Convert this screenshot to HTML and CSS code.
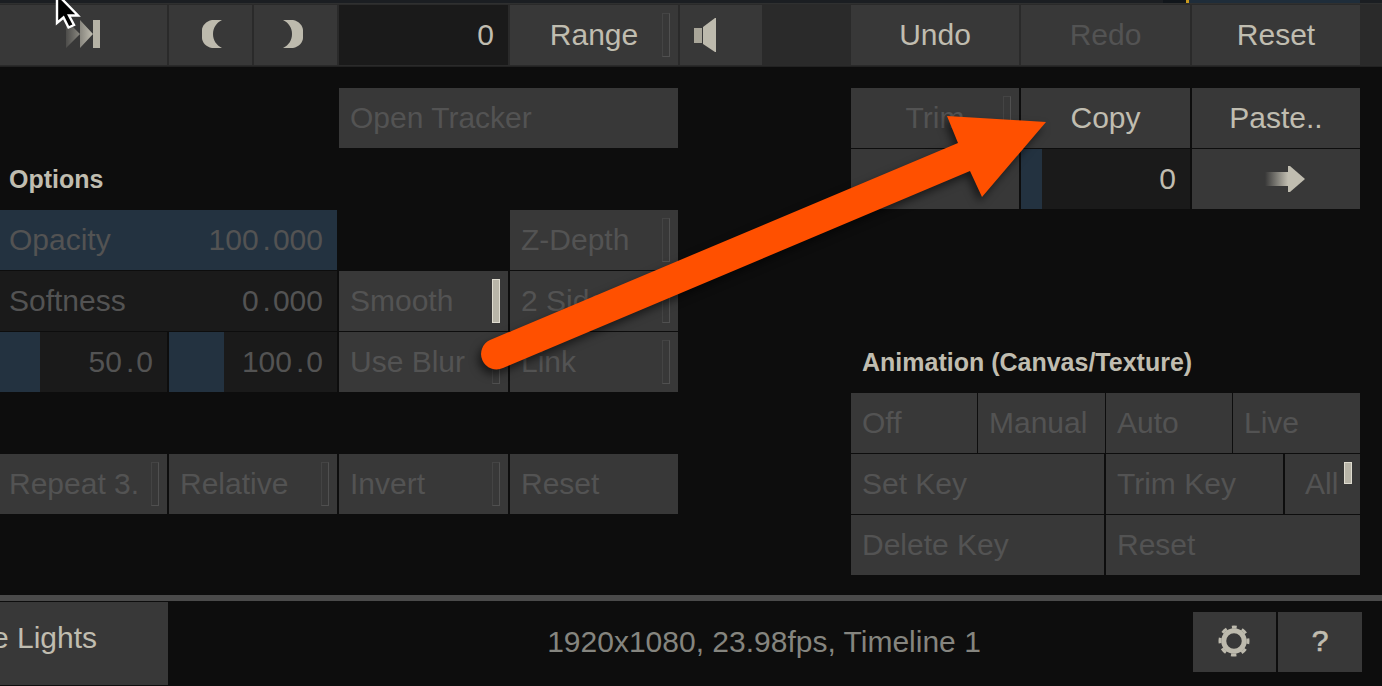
FILE: index.html
```html
<!DOCTYPE html>
<html lang="en">
<head>
<meta charset="utf-8">
<title>Panel</title>
<link rel="stylesheet" href="styles.css">
</head>
<body>
<div class="page">
  <div class="strip"><span class="strip-blue"></span><span class="strip-mark"></span></div>
  <header class="toolbar">
    <button class="btn center"><svg class="ico" width="36" height="30" viewBox="0 0 36 30"><defs><linearGradient id="fade" x1="0" x2="1" y1="0" y2="0"><stop offset="0" stop-color="#c0bdb0" stop-opacity=".15"/><stop offset="1" stop-color="#c0bdb0"/></linearGradient></defs><path fill="url(#fade)" d="M0 1 14 15 0 29zM14 1 27 15 14 29z"/><rect x="27" y="1" width="7" height="28" fill="#b5b2a5"/></svg></button>
    <button class="btn center half"><svg class="moon-l" width="20" height="28" viewBox="0 0 20 28"><path fill="#bdbaad" d="M20 0H10C4 1 0 6 0 10v8c0 4 4 9 10 10h10C14 25 11 20 11 14S14 3 20 0z"/></svg></button>
    <button class="btn center half"><svg class="moon-r" width="20" height="28" viewBox="0 0 20 28"><path fill="#bdbaad" d="M0 0h10c6 1 10 6 10 10v8c0 4-4 9-10 10H0c6-3 9-8 9-14S6 3 0 0z"/></svg></button>
    <div class="field on span-1"><span class="val">0</span></div>
    <button class="btn on center check-btn">Range<i class="chk"></i></button>
    <button class="btn sound"><svg width="22" height="34" viewBox="0 0 22 34"><path fill="#a9a699" d="M0 10h8v15H0z"/><path fill="#bdbaad" d="M9 9 21 0h1v34h-1L9 26z"/></svg></button>
    <div></div>
    <button class="btn on center">Undo</button>
    <button class="btn off center">Redo</button>
    <button class="btn on center">Reset</button>
  </header>

  <main class="panel">
    <button class="btn off left c4 r1">Open Tracker</button>
    <button class="btn off center c6 r1 check-btn">Trim<i class="chk"></i></button>
    <button class="btn on center c7 r1">Copy</button>
    <button class="btn on center c8 r1">Paste..</button>

    <h2 class="label label-options c1 r2">Options</h2>
    <button class="btn c6 r2"></button>
    <div class="field c7 r2 on"><span class="fill fill-12"></span><span class="val">0</span></div>
    <button class="btn center c8 r2"><svg class="next" width="40" height="26" viewBox="0 0 40 26"><defs><linearGradient id="tail" x1="0" x2="1" y1="0" y2="0"><stop offset="0" stop-color="#c0bdb0" stop-opacity="0"/><stop offset="1" stop-color="#c0bdb0"/></linearGradient></defs><path fill="url(#tail)" d="M0 6h23v14H0z"/><path fill="#c0bdb0" d="M23 0h2l15 13-15 13h-2z"/></svg></button>

    <div class="field wide blue c1-2 r3"><span>Opacity</span><span class="val">100<b class="dot">.</b>000</span></div>
    <button class="btn off left c5-like r3 check-btn z">Z-Depth<i class="chk"></i></button>

    <div class="field wide c1-2 r4"><span>Softness</span><span class="val">0<b class="dot">.</b>000</span></div>
    <button class="btn off left c4 r4 half-cell check-btn">Smooth<i class="chk chk-on"></i></button>
    <button class="btn off left c5-like r4 check-btn">2 Sided<i class="chk"></i></button>

    <div class="field off-text c1 r5"><span class="fill fill-40"></span><span class="val">50<b class="dot">.</b>0</span></div>
    <div class="field off-text c2 r5"><span class="fill fill-55"></span><span class="val">100<b class="dot">.</b>0</span></div>
    <button class="btn off left c4 r5 half-cell check-btn">Use Blur<i class="chk"></i></button>
    <button class="btn off left c5-like r5 check-btn">Link<i class="chk"></i></button>
    <h2 class="label c6 r5 label-indent">Animation (Canvas/Texture)</h2>

    <div class="anim-a r6">
      <button class="btn off left">Off</button>
      <button class="btn off left">Manual</button>
      <button class="btn off left">Auto</button>
      <button class="btn off left">Live</button>
    </div>

    <button class="btn off left tight c1 r7 check-btn">Repeat 3.<i class="chk"></i></button>
    <button class="btn off left c2 r7 check-btn">Relative<i class="chk"></i></button>
    <button class="btn off left c4 r7 half-cell check-btn">Invert<i class="chk"></i></button>
    <button class="btn off left c5-like r7">Reset</button>

    <div class="anim-b r7">
      <button class="btn off left">Set Key</button>
      <button class="btn off left">Trim Key</button>
      <button class="btn off all check-btn">All<i class="chk chk-on chk-short"></i></button>
    </div>
    <div class="anim-c r8">
      <button class="btn off left">Delete Key</button>
      <button class="btn off left">Reset</button>
    </div>
  </main>

  <div class="rule"></div>
  <footer class="footer">
    <button class="btn on lights">e Lights</button>
    <div class="status">1920x1080, 23.98fps, Timeline 1</div>
    <div class="tools">
      <button class="btn center tool"><svg class="gear" width="32" height="32" viewBox="-16 -16 32 32"><circle r="10.250" fill="none" stroke="#bdbaad" stroke-width="5"/><circle r="14" fill="none" stroke="#bdbaad" stroke-width="3" stroke-dasharray="5.500 5.500" stroke-dashoffset="2.750" transform="rotate(-90)"/></svg></button>
      <button class="btn on center tool help">?</button>
    </div>
  </footer>

  <svg class="callout" width="1382" height="686" viewBox="0 0 1382 686" aria-hidden="true"><path fill="#ff5000" d="M958 143 947 116 1046 122 982 197 970 171 503 368A15 15 0 0 1 490 340Z"/></svg>
  <svg class="cursor" width="30" height="32" viewBox="0 0 30 32" aria-hidden="true"><path fill="#000" stroke="#fff" stroke-width="2.400" d="M2 -6V23L8.500 17.500 13.500 27.500 19 25 14 15.500H23Z"/></svg>
</div>
</body>
</html>
```
FILE: styles.css
```css
* { box-sizing: border-box; }
html, body { margin: 0; height: 100%; background: #0d0d0d; overflow: hidden; }
.page {
  position: relative;
  width: 1382px;
  height: 686px;
  overflow: hidden;
  font-family: "Liberation Sans", Arial, sans-serif;
  font-size: 30px;
  color: #c0bdb0;
  background: #0d0d0d;
}
.strip {
  height: 4px;
  background: #1b1e22;
  border-bottom: 1px solid #2f3030;
  position: relative;
}
.strip-blue { position: absolute; left: 1163px; top: 0; width: 197px; height: 3px; background: linear-gradient(to right, #11161b 23px, #1f2d3a 23px); }
.strip-mark { position: absolute; left: 1186px; top: 0; width: 3px; height: 3px; background: #c99a1e; }
.toolbar {
  height: 63px;
  padding: 1px 0 2px;
  background: #2a2a2a;
  border-bottom: 1px solid #222;
  display: grid;
  grid-template-columns: 167px 83px 83px 169px 168px 82px 85px 168px 169px 168px;
  column-gap: 2px;
  grid-template-rows: 60px;
}
.btn {
  position: relative;
  display: flex;
  align-items: center;
  min-width: 0;
  margin: 0;
  padding: 0;
  border: 0;
  background: #383838;
  color: #c0bdb0;
  font: inherit;
  white-space: nowrap;
  overflow: hidden;
}
.center { justify-content: center; }
.left { justify-content: flex-start; padding-left: 11px; }
.tight { padding-left: 9px; }
.on { color: #c0bdb0; }
.off { color: #535353; }
.ico { margin-top: -2px; }
.sound { padding-left: 14px; }
.moon-l { margin: -2px 0 0 3px; }
.moon-r { margin: -2px 5px 0 0; }
.next { margin-left: 18px; }
.field {
  position: relative;
  display: flex;
  align-items: center;
  justify-content: flex-end;
  background: #1a1a1a;
  padding-right: 14px;
  white-space: nowrap;
  color: #535353;
  overflow: hidden;
}
.field.on { color: #c0bdb0; }
.wide { justify-content: space-between; padding-left: 9px; }
.blue { background: #233240; }
.val { position: relative; }
.dot { font-weight: 400; padding: 0 2px 0 4px; }
.fill { position: absolute; left: 0; top: 0; bottom: 0; background: #233240; }
.fill-12 { width: 21px; }
.fill-40 { width: 40px; }
.fill-55 { width: 55px; }

.chk {
  position: absolute;
  right: 8px;
  top: 8px;
  bottom: 8px;
  width: 8px;
  border: 1px solid #505050;
  border-left-color: #444;
  border-top-color: #444;
}
.chk-on { background: #b8b5a8; border-color: #dedbcf; }
.chk-short { bottom: auto; height: 22px; }

.panel {
  padding-top: 21px;
  display: grid;
  grid-template-columns: 167px 168px 169px 168px 169px 168px 169px 168px;
  column-gap: 2px;
  grid-template-rows: repeat(8, 60px);
  row-gap: 1px;
  height: 508px;
}
.c1 { grid-column: 1; }
.c2 { grid-column: 2; }
.c1-2 { grid-column: 1 / 3; }
.c4 { grid-column: 3 / 5; }
.half-cell { grid-column: 3; }
.c5-like { grid-column: 4; }
.c6 { grid-column: 6; }
.c7 { grid-column: 7; }
.c8 { grid-column: 8; }
.r1 { grid-row: 1; }
.r2 { grid-row: 2; }
.r3 { grid-row: 3; }
.r4 { grid-row: 4; }
.r5 { grid-row: 5; }
.r6 { grid-row: 6; }
.r7 { grid-row: 7; }
.r8 { grid-row: 8; }
.label {
  margin: 0;
  padding-left: 9px;
  align-self: center;
  font-size: 25px;
  font-weight: 700;
  white-space: nowrap;
}
.label-options { padding-top: 1px; }
.label-indent { padding-left: 11px; padding-top: 1px; }
.anim-a, .anim-b, .anim-c {
  grid-column: 6 / 9;
  display: grid;
  column-gap: 1px;
}
.anim-a { grid-template-columns: 126px 127px 126px 127px; }
.anim-b { grid-template-columns: 253px 177px 75px; column-gap: 2px; }
.anim-c { grid-template-columns: 253px 254px; column-gap: 2px; }
.all { padding-left: 20px; }

.rule { height: 7px; margin-top: 20px; background: #4a4a4a; border-bottom: 1px solid #0d0d0d; }
.footer {
  height: 84px;
  display: grid;
  grid-template-columns: 168px 1025px 169px;
  align-items: start;
}
.lights {
  height: 83px;
  justify-content: flex-end;
  padding: 0 71px 11px 0;
}
.status {
  height: 80px;
  padding-left: 167px;
  display: flex;
  align-items: center;
  justify-content: center;
  color: #85857f;
}
.tools {
  margin-top: 10px;
  display: grid;
  grid-template-columns: 83px 84px;
  column-gap: 2px;
  height: 60px;
}
.gear { margin: -2px 2px 0 0; }
.help { padding-bottom: 2px; font-weight: 400; -webkit-text-stroke: .7px #c0bdb0; }

.callout {
  position: absolute;
  left: 0;
  top: 0;
  filter: drop-shadow(-3px 5px 4px rgba(0, 0, 0, .55));
  pointer-events: none;
}
.cursor { position: absolute; left: 55px; top: 0; pointer-events: none; overflow: visible; }
```
